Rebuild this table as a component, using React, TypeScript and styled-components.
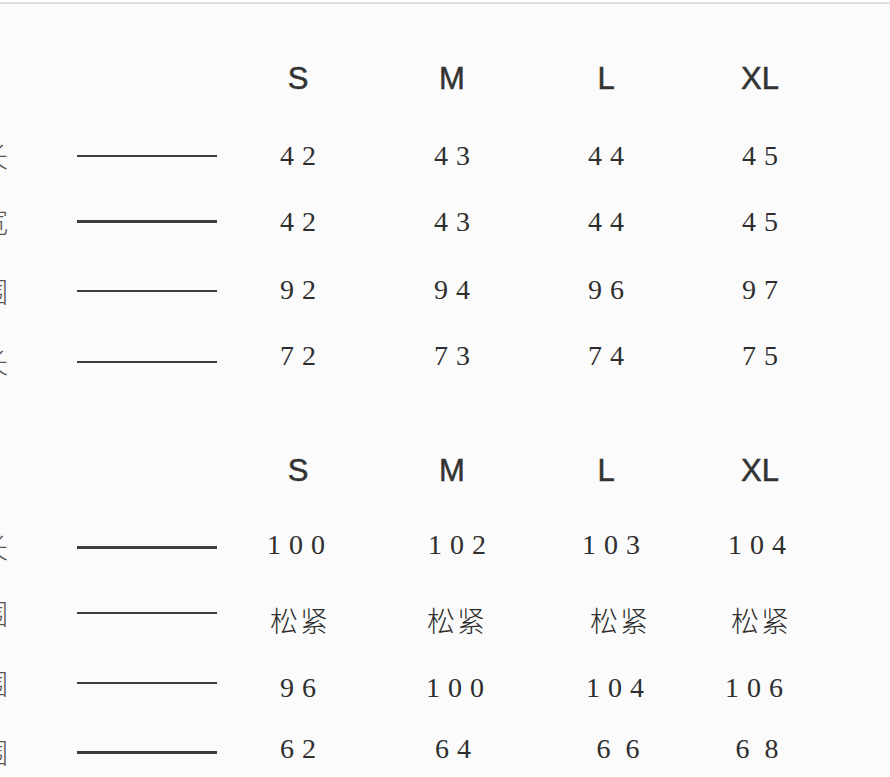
import React from 'react'
import styled, { createGlobalStyle } from 'styled-components'

const GlobalStyle = createGlobalStyle`
  html, body {
    margin: 0;
    padding: 0;
    background: #ffffff;
  }
  #root {
    min-height: 777px;
  }
`

type Cell = { text: string; shift?: number; wide?: boolean; cjk?: boolean }

type RowData = {
  label: string
  h: number
  lineOffset: number
  lineWeight: number
  cells: Cell[]
}

type SectionData = {
  headerHeight: number
  rows: RowData[]
}

const sizes = ['S', 'M', 'L', 'XL']

const sections: SectionData[] = [
  {
    headerHeight: 77,
    rows: [
      {
        label: '长',
        h: 66,
        lineOffset: 0,
        lineWeight: 2,
        cells: [{ text: '42' }, { text: '43' }, { text: '44' }, { text: '45' }],
      },
      {
        label: '宽',
        h: 68,
        lineOffset: -1,
        lineWeight: 3,
        cells: [{ text: '42' }, { text: '43' }, { text: '44' }, { text: '45' }],
      },
      {
        label: '围',
        h: 66,
        lineOffset: 1,
        lineWeight: 2,
        cells: [{ text: '92' }, { text: '94' }, { text: '96' }, { text: '97' }],
      },
      {
        label: '长',
        h: 115,
        lineOffset: 6,
        lineWeight: 2,
        cells: [{ text: '72' }, { text: '73' }, { text: '74' }, { text: '75' }],
      },
    ],
  },
  {
    headerHeight: 74,
    rows: [
      {
        label: '长',
        h: 75,
        lineOffset: 2,
        lineWeight: 3,
        cells: [
          { text: '100', shift: -2 },
          { text: '102', shift: 5 },
          { text: '103', shift: 5 },
          { text: '104', shift: -3 },
        ],
      },
      {
        label: '围',
        h: 68,
        lineOffset: -7,
        lineWeight: 2,
        cells: [
          { text: '松紧', cjk: true, shift: 1 },
          { text: '松紧', cjk: true, shift: 4 },
          { text: '松紧', cjk: true, shift: 13 },
          { text: '松紧', cjk: true, shift: 0 },
        ],
      },
      {
        label: '围',
        h: 61,
        lineOffset: -5,
        lineWeight: 2,
        cells: [
          { text: '96' },
          { text: '100', shift: 3 },
          { text: '104', shift: 9 },
          { text: '106', shift: -6 },
        ],
      },
      {
        label: '围',
        h: 40,
        lineOffset: 3,
        lineWeight: 3,
        cells: [
          { text: '62' },
          { text: '64', shift: 1 },
          { text: '6 6', wide: true, shift: 12 },
          { text: '6 8', wide: true, shift: -3 },
        ],
      },
    ],
  },
]

export default function App() {
  return (
    <>
      <GlobalStyle />
      <Page>
        {sections.map((section, si) => (
          <Section key={si}>
            <Row $h={section.headerHeight}>
              <Label />
              <span />
              {sizes.map((s) => (
                <SizeHead key={s}>{s}</SizeHead>
              ))}
            </Row>
            {section.rows.map((row, ri) => (
              <Row key={ri} $h={row.h}>
                <Label $offset={row.lineOffset}>
                  <LabelText>{row.label}</LabelText>
                </Label>
                <Rule $offset={row.lineOffset} $weight={row.lineWeight} />
                {row.cells.map((c, ci) => (
                  <ValueCell key={ci}>
                    <Value $shift={c.shift ?? 0} $wide={c.wide} $cjk={c.cjk}>
                      {c.text}
                    </Value>
                  </ValueCell>
                ))}
              </Row>
            ))}
          </Section>
        ))}
      </Page>
    </>
  )
}

const Page = styled.div`
  margin-top: 2px;
  border-top: 2px solid #dedede;
  background: #fbfbfb;
  min-height: 773px;
  padding-top: 55px;
  box-sizing: border-box;
  overflow: hidden;
`

const Section = styled.div`
  display: flex;
  flex-direction: column;
`

const Row = styled.div<{ $h: number }>`
  display: grid;
  grid-template-columns: 8px 213px repeat(4, 154px);
  height: ${(p) => p.$h}px;
  align-items: start;
`

const Label = styled.div<{ $offset?: number }>`
  height: 40px;
  width: 8px;
  overflow: hidden;
  display: flex;
  justify-content: flex-end;
  align-items: center;
  margin-top: ${(p) => p.$offset ?? 0}px;
`

const LabelText = styled.span`
  flex-shrink: 0;
  font-family: 'Noto Sans CJK SC', sans-serif;
  font-size: 28px;
  font-weight: 300;
  line-height: 40px;
  color: #555;
`

const Rule = styled.div<{ $offset: number; $weight: number }>`
  justify-self: end;
  width: 140px;
  margin-right: 4px;
  height: ${(p) => p.$weight}px;
  background: #3d3d3d;
  margin-top: ${(p) => 20 - p.$weight / 2 + p.$offset}px;
`

const SizeHead = styled.div`
  height: 40px;
  display: flex;
  align-items: center;
  justify-content: center;
  font-family: 'Liberation Sans', Arial, sans-serif;
  font-size: 31px;
  color: #333;
  -webkit-text-stroke: 0.5px #333;
`

const ValueCell = styled.div`
  height: 40px;
  display: flex;
  align-items: center;
  justify-content: center;
`

const Value = styled.span<{ $shift: number; $wide?: boolean; $cjk?: boolean }>`
  font-family: ${(p) =>
    p.$cjk
      ? "'Noto Sans CJK SC', sans-serif"
      : "'Liberation Serif', 'Times New Roman', serif"};
  font-size: 28px;
  font-weight: ${(p) => (p.$cjk ? 300 : 400)};
  line-height: 40px;
  color: #2e2e2e;
  white-space: pre;
  letter-spacing: ${(p) => (p.$cjk ? 2 : p.$wide ? 4 : 8)}px;
  padding-left: ${(p) => (p.$cjk ? 2 : p.$wide ? 4 : 8)}px;
  margin-left: ${(p) => p.$shift * 2}px;
`
